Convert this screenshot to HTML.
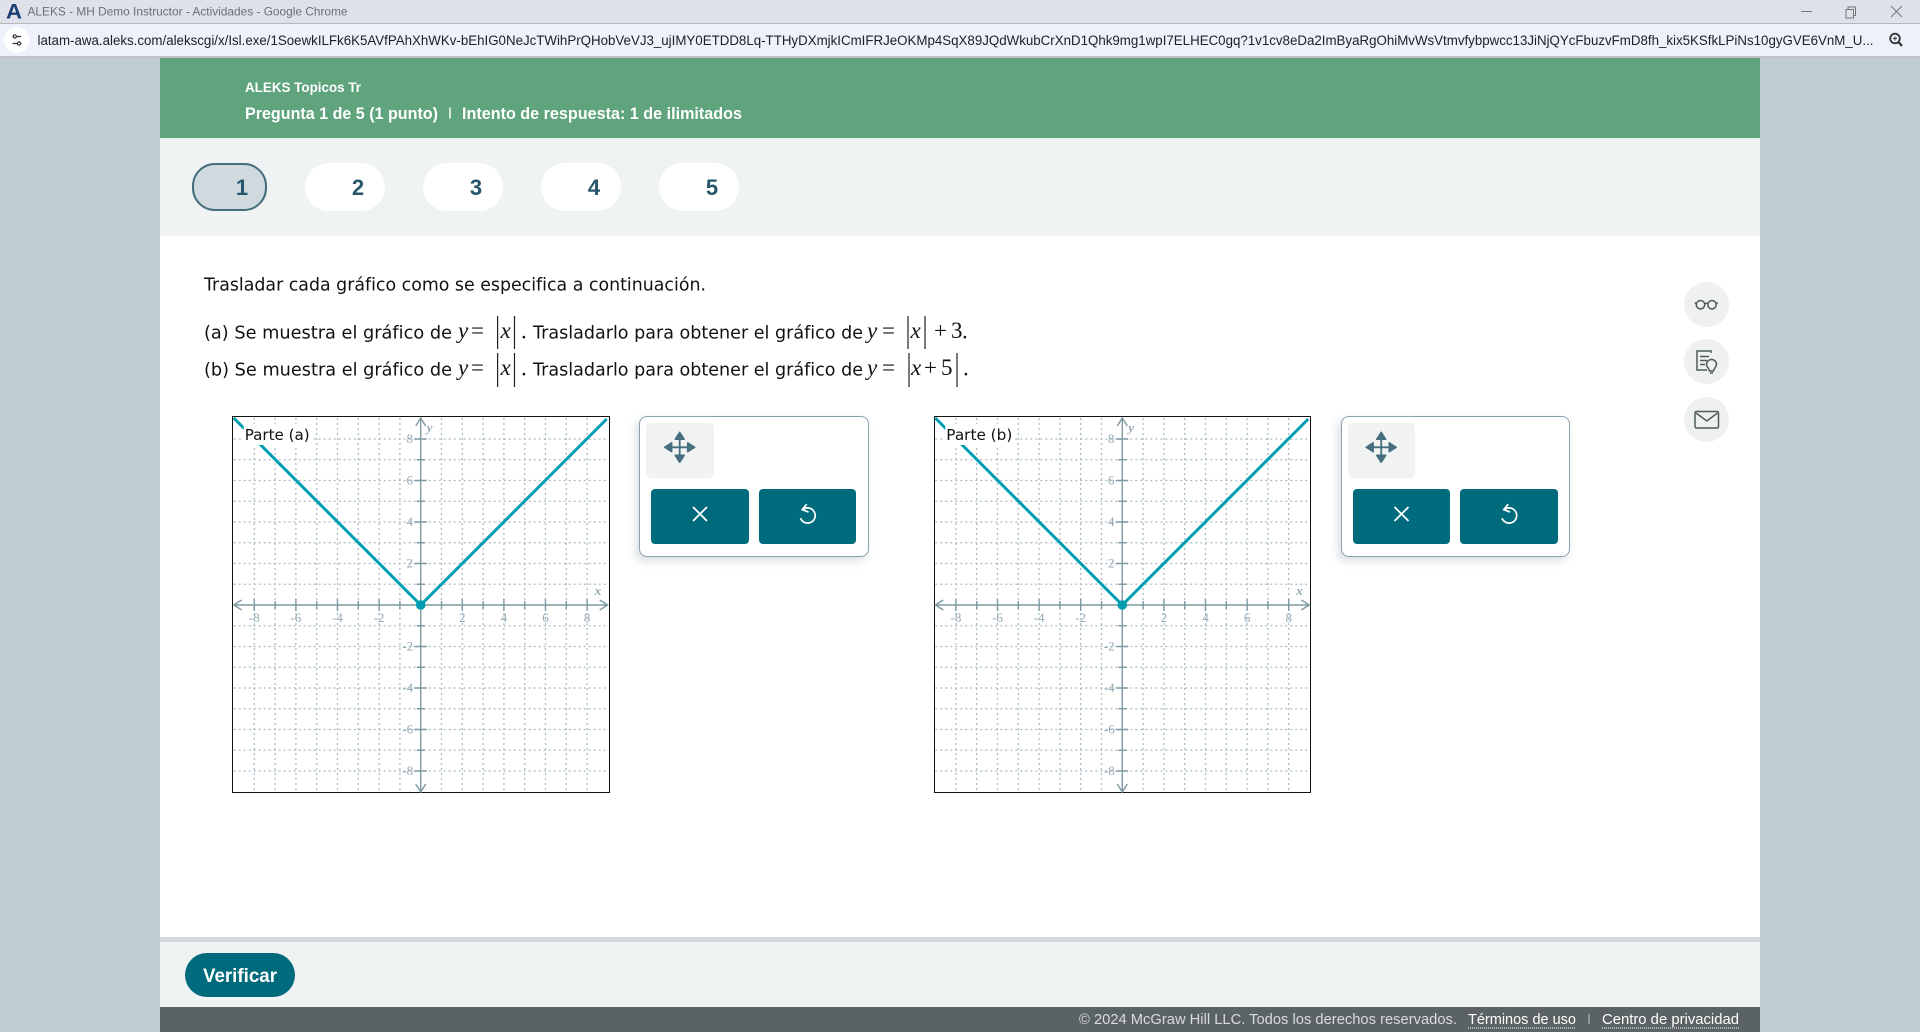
<!DOCTYPE html>
<html lang="es"><head><meta charset="utf-8"><title>ALEKS</title>
<style>
html,body{margin:0;padding:0;width:1920px;height:1032px;overflow:hidden;background:#bfccd2}
div{position:absolute;box-sizing:border-box}
svg.o{position:absolute;left:0;top:0}
.s{font-family:"Liberation Sans",sans-serif}
.d{font-family:"DejaVu Sans",sans-serif;font-size:17.6px;fill:#111}
.m{font-family:"Liberation Serif",serif;font-size:23px;fill:#111}
.i{font-style:italic}
.p{font-family:"Liberation Sans",sans-serif;font-size:22px;font-weight:700;fill:#25566b;text-anchor:middle}
.l{font-family:"Liberation Serif",serif;font-size:13px;fill:#93a9b2;text-anchor:middle}
.n{font-family:"Liberation Serif",serif;font-size:13px;font-weight:700;font-style:italic;fill:#93a9b2}
</style></head><body>
<div style="left:0;top:0;width:1920px;height:23px;background:#dee1e9"></div>
<div style="left:0;top:23px;width:1920px;height:1px;background:#b5b7ba"></div>
<div style="left:0;top:24px;width:1920px;height:32px;background:#edf2fa"></div>
<div style="left:0;top:56px;width:1920px;height:2px;background:#c0c2c5"></div>
<div style="left:4px;top:27px;width:26px;height:26px;border-radius:13px;background:#fff"></div>
<div style="left:160px;top:58px;width:1600px;height:80px;background:#5fa47c"></div>
<div style="left:160px;top:138px;width:1600px;height:98px;background:#eff3f4"></div>
<div style="left:160px;top:236px;width:1600px;height:701px;background:#fff"></div>
<div style="left:160px;top:937px;width:1600px;height:5px;background:#d3dbde"></div>
<div style="left:160px;top:942px;width:1600px;height:65px;background:#eff3f4"></div>
<div style="left:160px;top:1007px;width:1600px;height:25px;background:#5b6263"></div>
<div style="left:192px;top:163px;width:75px;height:48px;border-radius:23px;background:#d0d9dd;border:2px solid #466d7d"></div>
<div style="left:305px;top:163px;width:80px;height:48px;border-radius:24px;background:#fff"></div>
<div style="left:423px;top:163px;width:80px;height:48px;border-radius:24px;background:#fff"></div>
<div style="left:541px;top:163px;width:80px;height:48px;border-radius:24px;background:#fff"></div>
<div style="left:659px;top:163px;width:80px;height:48px;border-radius:24px;background:#fff"></div>
<div style="left:185px;top:953px;width:110px;height:44px;border-radius:22px;background:#006b7d"></div>
<div style="left:1684px;top:282px;width:45px;height:45px;border-radius:50%;background:#eff1f1"></div>
<div style="left:1684px;top:339px;width:45px;height:45px;border-radius:50%;background:#eff1f1"></div>
<div style="left:1684px;top:397px;width:45px;height:45px;border-radius:50%;background:#eff1f1"></div>
<div style="left:639px;top:416px;width:230px;height:141px;border:1px solid #8ba3ad;border-radius:8px;background:#fff;box-shadow:-3px 4px 9px rgba(80,110,125,.22)"></div>
<div style="left:1341px;top:416px;width:229px;height:141px;border:1px solid #8ba3ad;border-radius:8px;background:#fff;box-shadow:-3px 4px 9px rgba(80,110,125,.22)"></div>
<div style="left:646px;top:423px;width:68px;height:55px;border-radius:5px;background:#f1f3f3"></div>
<div style="left:1348px;top:423px;width:67px;height:55px;border-radius:5px;background:#f1f3f3"></div>
<div style="left:651px;top:489px;width:98px;height:55px;border-radius:4px;background:#006b7d"></div>
<div style="left:759px;top:489px;width:97px;height:55px;border-radius:4px;background:#006b7d"></div>
<div style="left:1353px;top:489px;width:97px;height:55px;border-radius:4px;background:#006b7d"></div>
<div style="left:1460px;top:489px;width:98px;height:55px;border-radius:4px;background:#006b7d"></div>
<div style="left:232px;top:416px;width:378px;height:377px;border:1.5px solid #111;background:#fff"></div>
<div style="left:934px;top:416px;width:377px;height:377px;border:1.5px solid #111;background:#fff"></div>

<svg class="o" width="1920" height="1032" viewBox="0 0 1920 1032" xmlns="http://www.w3.org/2000/svg">
<defs>
<g id="gr">
<path fill="none" stroke="#a8bbc3" stroke-width="1.25" stroke-dasharray="2 3" d="M-166.4-187V187M-145.6-187V187M-124.8-187V187M-104-187V187M-83.2-187V187M-62.4-187V187M-41.6-187V187M-20.8-187V187M20.8-187V187M41.6-187V187M62.4-187V187M83.2-187V187M104-187V187M124.8-187V187M145.6-187V187M166.4-187V187M-187-166H187M-187-145.25H187M-187-124.5H187M-187-103.75H187M-187-83H187M-187-62.25H187M-187-41.5H187M-187-20.75H187M-187 20.75H187M-187 41.5H187M-187 62.25H187M-187 83H187M-187 103.75H187M-187 124.5H187M-187 145.25H187M-187 166H187"/>
<path fill="none" stroke="#7f9aa3" stroke-width="1.4" d="M-187 0H187M0-187V187M-179-5L-187 0L-179 5M179-5L187 0L179 5M-5-179L0-187L5-179M-5 179L0 187L5 179"/>
<path fill="none" stroke="#7f9aa3" stroke-width="1.4" d="M-166.4-6V6M-145.6-4V4M-124.8-6V6M-104-4V4M-83.2-6V6M-62.4-4V4M-41.6-6V6M-20.8-4V4M20.8-4V4M41.6-6V6M62.4-4V4M83.2-6V6M104-4V4M124.8-6V6M145.6-4V4M166.4-6V6M-6-166H6M-4-145.25H4M-6-124.5H6M-4-103.75H4M-6-83H6M-4-62.25H4M-6-41.5H6M-4-20.75H4M-4 20.75H4M-6 41.5H6M-4 62.25H4M-6 83H6M-4 103.75H4M-6 124.5H6M-4 145.25H4M-6 166H6"/>
<path fill="none" stroke="#009eb0" stroke-width="3" d="M-187-187L0 0L186-186"/>
<circle cx="0" cy="0" r="4.8" fill="#009eb0"/>
<rect x="-177" y="-181" width="69" height="21" fill="#fff"/>
</g>
<g id="mv" fill="#476f7f">
<path d="M-15 0L-8-4.5V4.5ZM15 0L8-4.5V4.5ZM0-15L-4.5-8H4.5ZM0 15L-4.5 8H4.5Z" stroke="#476f7f" stroke-width="1.5" stroke-linejoin="round"/>
<path d="M-9 0H9M0-9V9" stroke="#476f7f" stroke-width="1.8" fill="none"/>
</g>
<g id="ux"><path d="M-7-7L7 7M7-7L-7 7" stroke="#fff" stroke-width="1.8" fill="none"/></g>
<g id="ur" fill="none" stroke="#fff" stroke-width="1.7"><path d="M-4.6-6.2A7.6 7.6 0 1 1-7 2.5"/><path d="M-0.8-11.5L-5.2-6.1L1-3.6"/></g>
</defs>

<!-- browser chrome -->
<text x="6" y="18.5" class="s" font-size="21" font-weight="700" fill="#1a3e72" textLength="16" lengthAdjust="spacingAndGlyphs">A</text>
<text x="27.5" y="15.5" class="s" font-size="12" fill="#6c6f73" textLength="320" lengthAdjust="spacingAndGlyphs">ALEKS - MH Demo Instructor - Actividades - Google Chrome</text>
<path d="M1801 11.5H1812" stroke="#777" fill="none"/>
<path d="M1846 9.5h7.5v8.5h-7.5zM1848 9.5v-2.5h7.5v8.5h-2" stroke="#777" fill="none"/>
<path d="M1891 6L1902 17M1902 6L1891 17" stroke="#777" fill="none"/>
<path d="M12.5 36.5h1.5M16 36.5h5M12.5 43.5h5M20 43.5h1.5" stroke="#333" stroke-width="1.3" fill="none"/>
<circle cx="14.8" cy="36.5" r="1.6" fill="none" stroke="#333" stroke-width="1.2"/><circle cx="19" cy="43.5" r="1.6" fill="none" stroke="#333" stroke-width="1.2"/>
<text x="37.5" y="45" class="s" font-size="13.5" fill="#202124" textLength="1836" lengthAdjust="spacingAndGlyphs">latam-awa.aleks.com/alekscgi/x/Isl.exe/1SoewkILFk6K5AVfPAhXhWKv-bEhIG0NeJcTWihPrQHobVeVJ3_ujIMY0ETDD8Lq-TTHyDXmjkICmIFRJeOKMp4SqX89JQdWkubCrXnD1Qhk9mg1wpI7ELHEC0gq?1v1cv8eDa2ImByaRgOhiMvWsVtmvfybpwcc13JiNjQYcFbuzvFmD8fh_kix5KSfkLPiNs10gyGVE6VnM_U...</text>
<circle cx="1895" cy="38.5" r="4.8" fill="none" stroke="#333" stroke-width="1.8"/><path d="M1898.5 42L1902 46" stroke="#333" stroke-width="2.2"/><path d="M1893 38.5h4M1895 36.5v4" stroke="#333"/>

<!-- header -->
<text x="245" y="92" class="s" font-size="14" font-weight="700" fill="#fff" textLength="116" lengthAdjust="spacingAndGlyphs">ALEKS Topicos Tr</text>
<text x="245" y="119" class="s" font-size="16.5" font-weight="700" fill="#fff" textLength="193" lengthAdjust="spacingAndGlyphs">Pregunta 1 de 5 (1 punto)</text>
<path d="M450 107.5V118.5" stroke="#fff" stroke-width="1.5"/>
<text x="462" y="119" class="s" font-size="16.5" font-weight="700" fill="#fff" textLength="280" lengthAdjust="spacingAndGlyphs">Intento de respuesta: 1 de ilimitados</text>

<text x="242" y="195" class="p">1</text><text x="358" y="195" class="p">2</text><text x="476" y="195" class="p">3</text><text x="594" y="195" class="p">4</text><text x="712" y="195" class="p">5</text>

<!-- problem text -->
<text x="204" y="290.5" class="d" textLength="502" lengthAdjust="spacingAndGlyphs">Trasladar cada gráfico como se especifica a continuación.</text>

<text x="204" y="338.5" class="d" textLength="248" lengthAdjust="spacingAndGlyphs">(a) Se muestra el gráfico de</text>
<text x="458" y="338" class="m i">y</text><text x="471" y="338" class="m">=</text>
<text x="500.5" y="338" class="m i">x</text><text x="521" y="338.5" class="m">.</text>
<text x="533" y="338.5" class="d" textLength="330" lengthAdjust="spacingAndGlyphs">Trasladarlo para obtener el gráfico de</text>
<text x="867" y="338" class="m i">y</text><text x="882" y="338" class="m">=</text>
<text x="910.5" y="338" class="m i">x</text><text x="934" y="338" class="m">+</text><text x="951" y="338" class="m">3</text><text x="962" y="338.5" class="m">.</text>
<path d="M497.6 316V349M514.5 316V349M908 316V349M925 316V349" stroke="#222" stroke-width="1.2"/>

<text x="204" y="375.5" class="d" textLength="248" lengthAdjust="spacingAndGlyphs">(b) Se muestra el gráfico de</text>
<text x="458" y="375" class="m i">y</text><text x="471" y="375" class="m">=</text>
<text x="500.5" y="375" class="m i">x</text><text x="521" y="375.5" class="m">.</text>
<text x="533" y="375.5" class="d" textLength="330" lengthAdjust="spacingAndGlyphs">Trasladarlo para obtener el gráfico de</text>
<text x="867" y="375" class="m i">y</text><text x="882" y="375" class="m">=</text>
<text x="911" y="375" class="m i">x</text><text x="924" y="375" class="m">+</text><text x="941" y="375" class="m">5</text><text x="963" y="375.5" class="m">.</text>
<path d="M497.6 353V387M514.5 353V387M909 353V387M957 353V387" stroke="#222" stroke-width="1.2"/>

<!-- graph a -->
<g transform="translate(420.7 605)"><use href="#gr"/>
<text class="l" x="-166.4" y="17">-8</text><text class="l" x="-124.8" y="17">-6</text><text class="l" x="-83.2" y="17">-4</text><text class="l" x="-41.6" y="17">-2</text><text class="l" x="41.6" y="17">2</text><text class="l" x="83.2" y="17">4</text><text class="l" x="124.8" y="17">6</text><text class="l" x="166.4" y="17">8</text>
<text class="l" x="-11" y="-162">8</text><text class="l" x="-11" y="-120.5">6</text><text class="l" x="-11" y="-79">4</text><text class="l" x="-11" y="-37.5">2</text><text class="l" x="-13" y="45.5">-2</text><text class="l" x="-13" y="87">-4</text><text class="l" x="-13" y="128.5">-6</text><text class="l" x="-13" y="170">-8</text>
<text class="n" x="174" y="-10">x</text><text class="n" x="6" y="-173">y</text>
<text x="-176" y="-165" font-family="'DejaVu Sans',sans-serif" font-size="15" fill="#111" textLength="65" lengthAdjust="spacingAndGlyphs">Parte (a)</text>
</g>
<!-- graph b -->
<g transform="translate(1122.3 605)"><use href="#gr"/>
<text class="l" x="-166.4" y="17">-8</text><text class="l" x="-124.8" y="17">-6</text><text class="l" x="-83.2" y="17">-4</text><text class="l" x="-41.6" y="17">-2</text><text class="l" x="41.6" y="17">2</text><text class="l" x="83.2" y="17">4</text><text class="l" x="124.8" y="17">6</text><text class="l" x="166.4" y="17">8</text>
<text class="l" x="-11" y="-162">8</text><text class="l" x="-11" y="-120.5">6</text><text class="l" x="-11" y="-79">4</text><text class="l" x="-11" y="-37.5">2</text><text class="l" x="-13" y="45.5">-2</text><text class="l" x="-13" y="87">-4</text><text class="l" x="-13" y="128.5">-6</text><text class="l" x="-13" y="170">-8</text>
<text class="n" x="174" y="-10">x</text><text class="n" x="6" y="-173">y</text>
<text x="-176" y="-165" font-family="'DejaVu Sans',sans-serif" font-size="15" fill="#111" textLength="66" lengthAdjust="spacingAndGlyphs">Parte (b)</text>
</g>

<!-- tool panels -->
<use href="#mv" x="679.7" y="447.3"/><use href="#ux" x="700" y="514"/><use href="#ur" x="807.5" y="515.7"/>
<use href="#mv" x="1381.2" y="447.3"/><use href="#ux" x="1401.5" y="514"/><use href="#ur" x="1509" y="515.7"/>

<!-- side icons -->
<g fill="none" stroke="#4d5a5c" stroke-width="1.5">
<circle cx="1700.5" cy="304.7" r="4.2"/><circle cx="1712" cy="304.7" r="4.2"/><path d="M1704.7 304C1705.5 303 1707 303 1707.8 304M1696.3 304L1694.8 302.5M1716.2 304L1717.7 302.5"/>
<path d="M1711 353V351H1697V370H1707"/><path d="M1700 356.5H1709M1700 360.5H1707M1700 364.5H1705"/>
<path d="M1709.5 371C1709 368 1706.5 367 1706.5 364.5A5 5 0 0 1 1716.5 364.5C1716.5 367 1714 368 1713.5 371Z"/><path d="M1710 373H1713"/>
<rect x="1695" y="411.5" width="23.5" height="16.5" rx="1.5"/><path d="M1696 413L1706.8 421L1717.5 413"/>
</g>

<!-- verificar & footer -->
<text x="203" y="982" class="s" font-size="19.5" font-weight="700" fill="#fff" textLength="74" lengthAdjust="spacingAndGlyphs">Verificar</text>
<text x="1079" y="1024" class="s" font-size="14.6" fill="#d7dcde" textLength="378" lengthAdjust="spacingAndGlyphs">© 2024 McGraw Hill LLC. Todos los derechos reservados.</text>
<text x="1468" y="1024" class="s" font-size="14.6" fill="#fff" textLength="108" lengthAdjust="spacingAndGlyphs">Términos de uso</text>
<path d="M1589 1014V1024" stroke="#c5cccf"/>
<text x="1602" y="1024" class="s" font-size="14.6" fill="#fff" textLength="137" lengthAdjust="spacingAndGlyphs">Centro de privacidad</text>
<path d="M1468 1028H1576M1602 1028H1739" stroke="#fff" stroke-dasharray="1 1" fill="none"/>
</svg>
</body></html>
